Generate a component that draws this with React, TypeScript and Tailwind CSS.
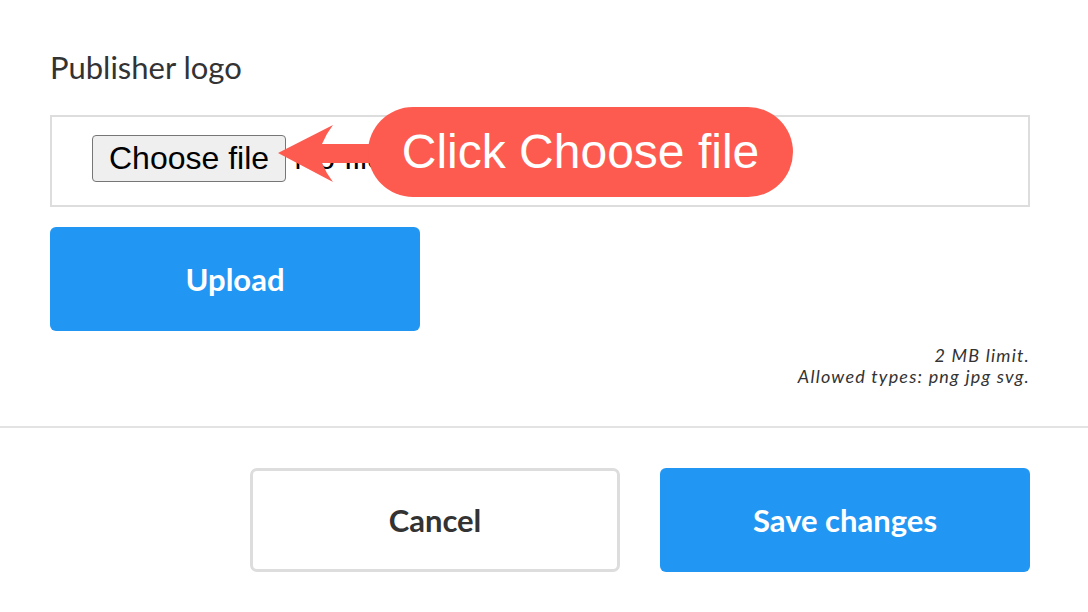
import React from "react";

export default function App() {
  return (
    <div className="relative w-[1088px] h-[612px] overflow-hidden bg-white font-['Lato',sans-serif] text-[#333333]">
      <div className="pl-[50px] pr-[58px] pt-[49px]">
        <div className="text-[31px] leading-[37px]">Publisher logo</div>
        <div className="mt-[29px] h-[92px] border-2 border-[#dddddd] flex items-center pl-[40px] pb-[6px] font-['Liberation_Sans',Arial,sans-serif] text-black">
          <button className="h-[47px] px-[16px] bg-[#efefef] border border-[#767676] rounded-[4px] text-[32px] leading-none">
            Choose file
          </button>
          <span className="ml-[8px] text-[32px] leading-none">No file chosen</span>
        </div>
        <button className="mt-[20px] w-[370px] h-[104px] bg-[#2196f3] rounded-[6px] text-white font-bold text-[31px]">
          Upload
        </button>
        <div className="mt-[14px] text-right italic text-[18px] leading-[21px] tracking-[1.2px] text-[#333333]">
          <div>2 MB limit.</div>
          <div>Allowed types: png jpg svg.</div>
        </div>
      </div>
      <div className="mt-[39px] h-[2px] bg-[#e3e3e3]" />
      <div className="mt-[40px] pr-[58px] flex justify-end gap-[40px]">
        <button className="w-[370px] h-[104px] border-[3px] border-[#dddddd] rounded-[7px] bg-white text-[#333333] font-bold text-[31px]">
          Cancel
        </button>
        <button className="w-[370px] h-[104px] bg-[#2196f3] rounded-[6px] text-white font-bold text-[31px]">
          Save changes
        </button>
      </div>

      <svg className="absolute inset-0 w-[1088px] h-[612px] pointer-events-none" viewBox="0 0 1088 612">
        <path
          d="M278 153 L333 125 Q326 134 322 144 L380 144 L380 163 L322 163 Q326 173 333 182 Z"
          fill="#fd5b4f"
        />
      </svg>
      <div className="absolute left-[368px] top-[107px] w-[425px] h-[90px] rounded-full bg-[#fd5b4f] flex items-center justify-center font-['Liberation_Sans',Arial,sans-serif] text-white text-[48px] leading-none">
        Click Choose file
      </div>
    </div>
  );
}
